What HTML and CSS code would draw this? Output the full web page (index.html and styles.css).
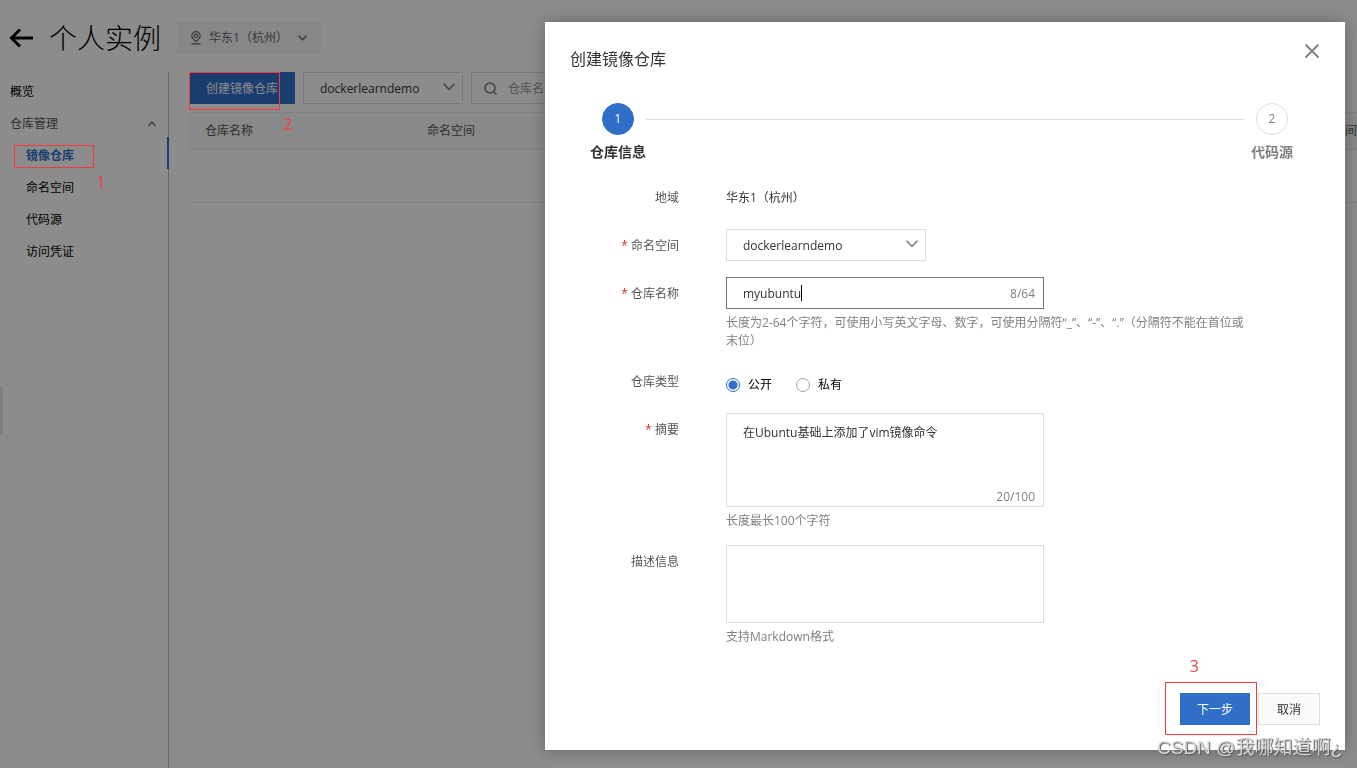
FILE: index.html
```html
<!DOCTYPE html>
<html lang="zh-CN">
<head>
<meta charset="utf-8">
<meta name="viewport" content="width=device-width, initial-scale=1">
<title>创建镜像仓库 - 个人实例</title>
<link rel="stylesheet" href="styles.css">
</head>
<body>
<div class="page">
  <header class="page-header">
    <button class="back" type="button" aria-label="返回">
      <svg width="24" height="20" viewBox="0 0 24 20" fill="none" stroke="currentColor" stroke-width="3"><path d="M24 10H2.500M11 1.500L2.500 10L11 18.500"/></svg>
    </button>
    <h1 class="page-title">个人实例</h1>
    <button class="region" type="button">
      <svg width="12" height="14" viewBox="0 0 12 14" fill="none" stroke="currentColor" stroke-width="1.200"><path d="M6 10.500C3.500 8.500 1.800 6.800 1.800 4.800a4.200 4.200 0 0 1 8.400 0C10.200 6.800 8.500 8.500 6 10.500ZM1.500 12.800h9"/><circle cx="6" cy="4.800" r="1.700"/></svg>
      <span>华东1（杭州）</span>
      <svg class="region-arrow" width="9" height="6" viewBox="0 0 9 6" fill="none" stroke="currentColor" stroke-width="1.400"><path d="M.5.700l4 4 4-4"/></svg>
    </button>
  </header>
  <div class="page-body">
    <nav class="sidebar">
      <a class="nav-item" href="#overview">概览</a>
      <button class="nav-group" type="button">仓库管理
        <svg width="8" height="6" viewBox="0 0 8 6" fill="none" stroke="currentColor" stroke-width="1.200"><path d="M.5 4.800L4 1.200l3.500 3.600"/></svg>
      </button>
      <a class="nav-item nav-child nav-active" href="#repositories">镜像仓库</a>
      <a class="nav-item nav-child" href="#namespaces">命名空间</a>
      <a class="nav-item nav-child" href="#source">代码源</a>
      <a class="nav-item nav-child" href="#credentials">访问凭证</a>
    </nav>
    <main class="main">
      <div class="toolbar">
        <button class="btn btn-primary" type="button">创建镜像仓库</button>
        <div class="select select-filter">
          <select aria-label="命名空间筛选"><option>dockerlearndemo</option></select>
          <svg width="12" height="8" viewBox="0 0 12 8" fill="none" stroke="currentColor" stroke-width="1.600"><path d="M.6.800L6 6.400 11.400.800"/></svg>
        </div>
        <div class="search">
          <svg width="13" height="13" viewBox="0 0 13 13" fill="none" stroke="currentColor" stroke-width="1.500"><circle cx="6" cy="6" r="5"/><path d="M9.500 9.500L12.500 12.500"/></svg>
          <input type="search" placeholder="仓库名称" aria-label="搜索仓库名称">
        </div>
      </div>
      <table class="repo-table">
        <thead><tr><th class="col-name">仓库名称</th><th>命名空间</th><th class="col-time">创建时间</th></tr></thead>
        <tbody><tr><td colspan="3"></td></tr></tbody>
      </table>
    </main>
  </div>
  <div class="drawer-handle"></div>
</div>

<div class="overlay">
  <section class="dialog" role="dialog" aria-modal="true" aria-labelledby="dialog-title">
    <header class="dialog-header">
      <h2 class="dialog-title" id="dialog-title">创建镜像仓库</h2>
      <button class="close" type="button" aria-label="关闭">
        <svg width="16" height="16" viewBox="0 0 16 16" fill="none" stroke="currentColor" stroke-width="2"><path d="M1.500 1.500l13 13M14.500 1.500l-13 13"/></svg>
      </button>
    </header>
    <div class="steps">
      <div class="step step-current"><span class="step-number">1</span><span class="step-label">仓库信息</span></div>
      <div class="step-line"></div>
      <div class="step"><span class="step-number">2</span><span class="step-label">代码源</span></div>
    </div>
    <form class="form">
      <div class="row">
        <span class="label">地域</span>
        <div class="field value">华东1（杭州）</div>
      </div>
      <div class="row">
        <label class="label required" for="namespace">命名空间</label>
        <div class="field">
          <div class="select">
            <select id="namespace"><option>dockerlearndemo</option></select>
            <svg width="12" height="8" viewBox="0 0 12 8" fill="none" stroke="currentColor" stroke-width="1.600"><path d="M.6.800L6 6.400 11.400.800"/></svg>
          </div>
        </div>
      </div>
      <div class="row">
        <label class="label required" for="repo-name">仓库名称</label>
        <div class="field">
          <div class="control">
            <input class="input input-active" id="repo-name" type="text" value="myubuntu" maxlength="64">
            <span class="caret"></span>
            <span class="counter">8/64</span>
          </div>
          <p class="hint">长度为2-64个字符，可使用小写英文字母、数字，可使用分隔符“_”、“-”、“.”（分隔符不能在首位或末位）</p>
        </div>
      </div>
      <div class="row" role="radiogroup" aria-labelledby="type-label">
        <span class="label" id="type-label">仓库类型</span>
        <div class="field radios">
          <label class="radio"><input type="radio" name="type" checked>公开</label>
          <label class="radio"><input type="radio" name="type">私有</label>
        </div>
      </div>
      <div class="row">
        <label class="label required" for="summary">摘要</label>
        <div class="field">
          <div class="control">
            <textarea class="input textarea-summary" id="summary" maxlength="100">在Ubuntu基础上添加了vim镜像命令</textarea>
            <span class="counter">20/100</span>
          </div>
          <p class="hint">长度最长100个字符</p>
        </div>
      </div>
      <div class="row">
        <label class="label" for="description">描述信息</label>
        <div class="field">
          <div class="control"><textarea class="input textarea-description" id="description"></textarea></div>
          <p class="hint">支持Markdown格式</p>
        </div>
      </div>
    </form>
    <footer class="dialog-footer">
      <button class="btn btn-primary" type="button">下一步</button>
      <button class="btn" type="button">取消</button>
      <div class="mark mark-next"></div>
      <span class="mark-number mark-number-next">3</span>
    </footer>
  </section>
  <div class="mark mark-nav"></div>
  <span class="mark-number mark-number-nav">1</span>
  <div class="mark mark-create"></div>
  <span class="mark-number mark-number-create">2</span>
  <div class="watermark">CSDN @我哪知道啊¿</div>
</div>
</body>
</html>
```

FILE: styles.css
```css
* { box-sizing: border-box; }

body {
  margin: 0;
  overflow: hidden;
  background: #fff;
  color: #333;
  font: 12px/18px "Open Sans", "Noto Sans CJK SC", sans-serif;
}

h1, h2, p { margin: 0; font-weight: 400; }
button, input, select, textarea { margin: 0; color: inherit; font: inherit; }
button { padding: 0; border: 0; background: none; }
a { color: inherit; text-decoration: none; }
svg { display: block; flex: none; }

.page { display: flex; flex-direction: column; height: 100vh; }

.page-header {
  display: flex;
  align-items: center;
  height: 72px;
  padding: 4px 9px 0;
}
.back { width: 24px; margin-right: 16px; color: #000; }
.page-title { color: #000; font-size: 28px; line-height: 36px; font-weight: 300; }
.region {
  display: flex;
  align-items: center;
  width: 144px;
  height: 32px;
  margin-left: 16px;
  padding: 0 14px 0 13px;
  background: #f4f6fa;
  color: #666;
  gap: 7px;
}
.region-arrow { margin-left: auto; }

.page-body { display: flex; flex: 1; min-height: 0; }

.sidebar {
  display: flex;
  flex: none;
  flex-direction: column;
  width: 169px;
  padding-top: 4px;
  border-right: 1px solid #c0c0c0;
  color: #000;
}
.nav-item { padding-left: 10px; line-height: 32px; }
.nav-group {
  display: flex;
  align-items: center;
  justify-content: space-between;
  height: 32px;
  padding: 0 12px 0 10px;
  color: #555;
}
.nav-child { padding-left: 26px; }
.nav-active { position: relative; color: #2f6fc8; font-weight: 700; }
.nav-active::after {
  content: "";
  position: absolute;
  top: -3px;
  right: -1px;
  width: 2px;
  height: 32px;
  background: #2f6fc8;
}

.main { flex: 1; min-width: 0; padding-left: 20px; }
.toolbar { display: flex; gap: 8px; }

.btn {
  height: 32px;
  padding: 1px 16px 0;
  border: 1px solid #dedede;
  background: #fafafa;
  white-space: nowrap;
}
.btn-primary { border-color: #2f6fc8; background: #2f6fc8; color: #fff; }

.select { position: relative; width: 200px; color: #333; }
.select-filter { width: 160px; }
.select select {
  display: block;
  width: 100%;
  height: 32px;
  padding: 2px 32px 0 16px;
  border: 1px solid #dedede;
  border-radius: 0;
  background: #fff;
  appearance: none;
}
.select svg { position: absolute; top: 11px; right: 8px; color: #808080; }

.search {
  display: flex;
  align-items: center;
  width: 240px;
  height: 32px;
  padding: 0 12px;
  border: 1px solid #dedede;
  color: #808080;
  gap: 9px;
}
.search input { width: 100%; padding: 2px 2px 0; border: 0; outline: 0; background: none; }
.search input::placeholder { color: #999; }

.repo-table {
  width: 100%;
  margin-top: 8px;
  border-collapse: collapse;
  table-layout: fixed;
}
.repo-table th {
  height: 37px;
  padding: 0 0 0 16px;
  border-top: 1px solid #ebebeb;
  border-bottom: 1px solid #ebebeb;
  background: #fafafa;
  color: #555;
  font-weight: 400;
  text-align: left;
  white-space: nowrap;
}
.repo-table td { height: 53px; border-bottom: 1px solid #ebebeb; }
.col-name { width: 222px; }
.repo-table .col-time { width: 64px; }

.drawer-handle {
  position: absolute;
  top: 387px;
  left: 0;
  width: 3px;
  height: 48px;
  background: #e6e6e6;
}

.overlay {
  position: fixed;
  inset: 0;
  display: flex;
  align-items: flex-start;
  justify-content: flex-end;
  padding: 22px 12px 18px;
  background: rgba(0, 0, 0, .45);
}

.dialog {
  width: 800px;
  max-width: 100%;
  padding: 25px;
  background: #fff;
  box-shadow: 0 0 16px rgba(0, 0, 0, .3);
}
.dialog-header { display: flex; align-items: flex-start; justify-content: space-between; }
.dialog-title { font-size: 16px; line-height: 24px; }
.close { width: 16px; height: 16px; margin-top: -4px; color: #808080; }

.steps { display: flex; margin-top: 32px; padding: 0 20px; }
.step {
  display: flex;
  flex: none;
  flex-direction: column;
  align-items: center;
  width: 56px;
  gap: 8px;
  color: #808080;
}
.step-number {
  width: 32px;
  border: 1px solid #dedede;
  border-radius: 50%;
  line-height: 30px;
  text-align: center;
}
.step-label { font-size: 14px; font-weight: 700; white-space: nowrap; }
.step-current { color: #333; }
.step-current .step-number { border-color: #2f6fc8; background: #2f6fc8; color: #fff; }
.step-line { flex: 1; height: 1px; margin-top: 16px; background: #dedede; }

.form { display: flex; flex-direction: column; margin-top: 20px; gap: 16px; }
.row { display: grid; grid-template-columns: 109px 1fr; column-gap: 47px; }
.label, .value { height: 32px; line-height: 34px; }
.label { color: #555; text-align: right; }
.required::before { content: "* "; color: #d93026; }
.field { padding-right: 70px; }

.control { position: relative; width: 318px; max-width: 100%; }
.input {
  display: block;
  width: 100%;
  height: 32px;
  padding: 0 64px 0 16px;
  border: 1px solid #dedede;
  border-radius: 0;
  outline: 0;
  background: #fff;
  resize: none;
}
.input-active { border-color: #737373; }
textarea.input { padding: 10px 16px; }
.textarea-summary { height: 94px; }
.textarea-description { height: 78px; }
.counter { position: absolute; right: 9px; bottom: 6px; color: #808080; }
.textarea-summary + .counter { bottom: 1px; }
.caret { position: absolute; top: 8px; left: 75px; width: 1px; height: 16px; background: #000; }
.hint {
  margin-top: 5px;
  margin-bottom: -1px;
  color: #808080;
  text-spacing-trim: space-all;
}

.radios { display: flex; padding-top: 8px; gap: 24px; }
.radio { display: flex; align-items: center; height: 24px; gap: 8px; color: #000; }
.radio input {
  width: 14px;
  height: 14px;
  border: 1px solid #a6a6a6;
  border-radius: 50%;
  background: #fff;
  appearance: none;
}
.radio input:checked { border-color: #2f6fc8; background: radial-gradient(#2f6fc8 0 4px, #fff 5px); }

.dialog-footer {
  position: relative;
  display: flex;
  justify-content: flex-end;
  margin-top: 48px;
  gap: 8px;
}
.dialog-footer .btn { padding: 1px 18px 0; }
.dialog-footer .btn-primary { padding: 1px 16px 0; }

.mark { position: absolute; border: 1px solid #f8383a; pointer-events: none; }
.mark-number { position: absolute; color: #f8383a; font-size: 16px; line-height: 20px; }
.mark-nav { top: 145px; left: 14px; width: 80px; height: 23px; }
.mark-number-nav { top: 172px; left: 96px; }
.mark-create { top: 72px; left: 189px; width: 91px; height: 38px; }
.mark-number-create { top: 114px; left: 283px; }
.mark-next { top: -11px; right: 63px; width: 92px; height: 53px; }
.mark-number-next { top: -37px; right: 121px; }

.watermark {
  position: absolute;
  right: 15px;
  bottom: 8px;
  color: #d6d6d6;
  font: 19px/24px "Liberation Sans", "Noto Sans CJK SC", sans-serif;
  text-shadow: 1px 1px 1px #555;
  white-space: nowrap;
}
```
